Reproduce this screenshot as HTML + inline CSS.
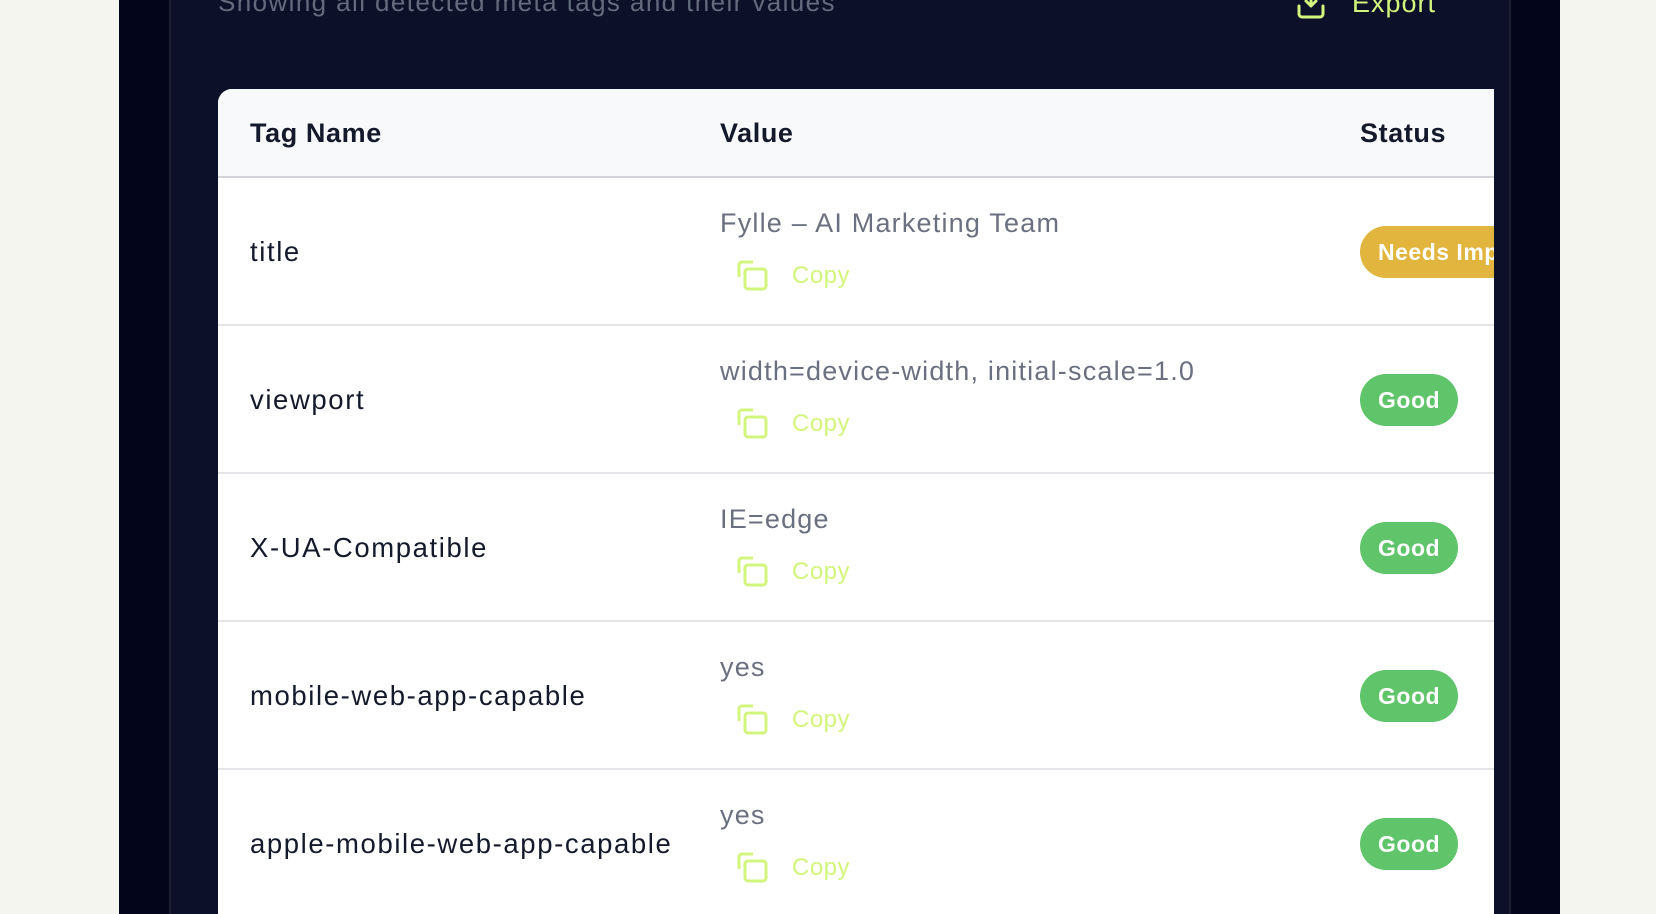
<!DOCTYPE html>
<html><head><meta charset="utf-8"><style>
*{margin:0;padding:0;box-sizing:border-box}
html{overflow:hidden;height:914px}
body{width:1656px;height:914px;overflow:hidden;background:#f5f5f0;font-family:"Liberation Sans",sans-serif;position:relative}
.outer{position:absolute;left:119px;top:0;width:1441px;height:914px;background:#03061a}
.inner{position:absolute;left:169px;top:0;width:1342px;height:914px;background:#0c1029;border-left:2px solid #1c2035;border-right:2px solid #1c2035}
.sub{position:absolute;left:218px;top:-13px;font-size:26px;letter-spacing:1.4px;color:#646b7e;white-space:nowrap}
.exp{position:absolute;left:1352px;top:-12px;font-size:27px;letter-spacing:1px;color:#d3f57c}
.tbl{position:absolute;left:218px;top:89px;width:1276px;height:825px;background:#fff;border-radius:14px 0 0 0;overflow:hidden}
.hd{height:89px;background:#f8f9fb;border-bottom:2px solid #d4d5da;position:relative}
.hd span{position:absolute;top:29px;font-size:27px;font-weight:bold;color:#141a2b;letter-spacing:0.6px}
.row{height:148px;border-bottom:2px solid #e5e6ea;position:relative}
.tn{position:absolute;left:32px;top:58px;font-size:27.5px;letter-spacing:1.6px;color:#141a2b;white-space:nowrap}
.val{position:absolute;left:502px;top:30px;font-size:27px;letter-spacing:1.2px;color:#6b7080;white-space:nowrap}
.cp{position:absolute;left:519px;top:82px;width:32px;height:32px}
.ct{position:absolute;left:574px;top:84px;font-size:24px;letter-spacing:0.5px;color:#d3f57c}
.b{position:absolute;left:1142px;top:48px;height:52px;border-radius:26px;color:#fff;font-weight:bold;font-size:23px;letter-spacing:0.5px;line-height:52px;padding:0 18px;white-space:nowrap}
.g{background:#5fc46a}.y{background:#e2b53f;width:220px}
</style></head><body>
<div class="outer"></div><div class="inner"></div>
<div class="sub">Showing all detected meta tags and their values</div>
<svg style="position:absolute;left:1296px;top:-4px" width="30" height="24" viewBox="0 0 30 24" fill="none" stroke="#d3f57c" stroke-width="3" stroke-linecap="round" stroke-linejoin="round"><path d="M15 0v10M10 5l5 5 5-5M3 10v8a3 3 0 0 0 3 3h18a3 3 0 0 0 3-3v-8"/></svg>
<div class="exp">Export</div>
<div class="tbl">
<div class="hd"><span style="left:32px">Tag Name</span><span style="left:502px">Value</span><span style="left:1142px">Status</span></div>
<div class="row"><div class="tn">title</div><div class="val">Fylle – AI Marketing Team</div><svg class="cp" viewBox="0 0 32 32" fill="none" stroke="#d3f57c" stroke-width="3"><path d="M2 17V5a3 3 0 0 1 3-3h11"/><rect x="8" y="9" width="21" height="20" rx="3"/></svg><div class="ct">Copy</div><div class="b y">Needs Improvement</div></div>
<div class="row"><div class="tn">viewport</div><div class="val">width=device-width, initial-scale=1.0</div><svg class="cp" viewBox="0 0 32 32" fill="none" stroke="#d3f57c" stroke-width="3"><path d="M2 17V5a3 3 0 0 1 3-3h11"/><rect x="8" y="9" width="21" height="20" rx="3"/></svg><div class="ct">Copy</div><div class="b g">Good</div></div>
<div class="row"><div class="tn">X-UA-Compatible</div><div class="val">IE=edge</div><svg class="cp" viewBox="0 0 32 32" fill="none" stroke="#d3f57c" stroke-width="3"><path d="M2 17V5a3 3 0 0 1 3-3h11"/><rect x="8" y="9" width="21" height="20" rx="3"/></svg><div class="ct">Copy</div><div class="b g">Good</div></div>
<div class="row"><div class="tn">mobile-web-app-capable</div><div class="val">yes</div><svg class="cp" viewBox="0 0 32 32" fill="none" stroke="#d3f57c" stroke-width="3"><path d="M2 17V5a3 3 0 0 1 3-3h11"/><rect x="8" y="9" width="21" height="20" rx="3"/></svg><div class="ct">Copy</div><div class="b g">Good</div></div>
<div class="row"><div class="tn">apple-mobile-web-app-capable</div><div class="val">yes</div><svg class="cp" viewBox="0 0 32 32" fill="none" stroke="#d3f57c" stroke-width="3"><path d="M2 17V5a3 3 0 0 1 3-3h11"/><rect x="8" y="9" width="21" height="20" rx="3"/></svg><div class="ct">Copy</div><div class="b g">Good</div></div>
</div>
</body></html>
